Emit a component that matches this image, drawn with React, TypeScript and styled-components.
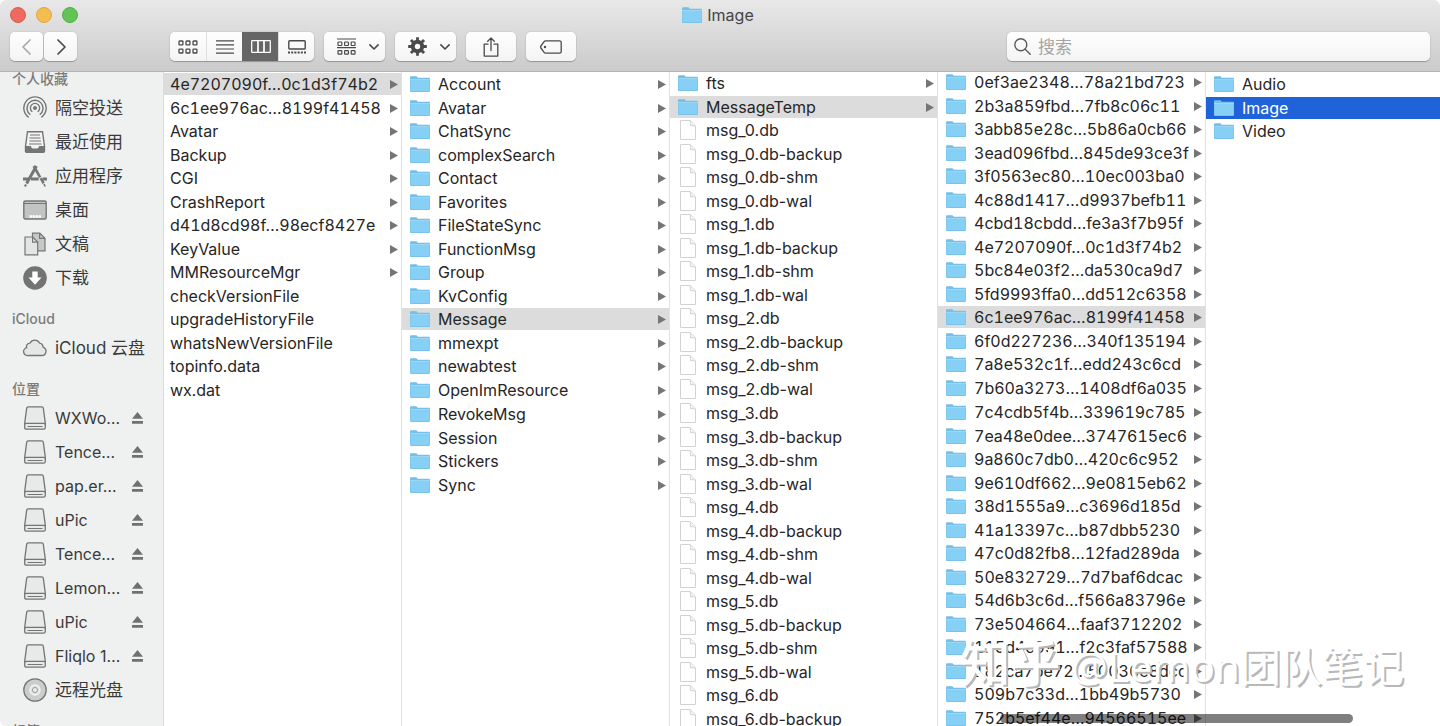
import React from "react";
import styled, { createGlobalStyle, css } from "styled-components";

const GlobalStyle = createGlobalStyle`
  * { box-sizing: border-box; }
  body {
    margin: 0;
    background: #fff;
    font-family: Inter, "Noto Sans CJK SC", sans-serif;
    font-size: 16px;
    color: #262626;
  }
  ul { list-style: none; margin: 0; padding: 0; }
  button { font: inherit; color: inherit; border: 0; padding: 0; background: none; text-align: left; }
  svg { display: block; flex: none; }
`;

const Window = styled.div`
  position: relative;
  display: flex;
  flex-direction: column;
  height: 100vh;
  overflow: hidden;
  border-radius: 6px;
`;

const Header = styled.header`
  flex: none;
  background: linear-gradient(#e8e8e8, #cbcbcb);
  border-bottom: 1px solid #b4b4b4;
  padding: 0 10px 10px;
`;

const TitleBar = styled.div`
  display: grid;
  grid-template-columns: 1fr auto 1fr;
  align-items: center;
  height: 30px;
`;

const Lights = styled.div`
  display: flex;
  gap: 10px;
`;

const Light = styled.button<{ $color: string; $ring: string }>`
  width: 16px;
  height: 16px;
  border-radius: 50%;
  background: ${(p) => p.$color};
  border: 1px solid ${(p) => p.$ring};
`;

const Title = styled.h1`
  display: flex;
  align-items: center;
  gap: 5px;
  margin: 0;
  padding-right: 4px;
  font-size: 16px;
  font-weight: 400;
  color: #454545;
`;

const Toolbar = styled.div`
  display: flex;
  align-items: center;
  gap: 10px;
  height: 31px;
  padding-top: 2px;
`;

const raised = css`
  background: linear-gradient(#fefefe, #f4f4f4);
  border-radius: 5px;
  box-shadow: 0 0 0 1px rgba(0, 0, 0, 0.04), 0 1px 1px rgba(0, 0, 0, 0.25);
`;

const ToolButton = styled.button<{ $width: number }>`
  ${raised}
  display: flex;
  align-items: center;
  justify-content: center;
  gap: 11px;
  width: ${(p) => p.$width}px;
  height: 29px;
  color: #4a4a4a;
  &:disabled { color: #a9a9a9; }
`;

const MenuButton = styled(ToolButton)`
  justify-content: space-between;
  padding: 0 6px 0 13px;
`;

const NavGroup = styled.div`
  display: flex;
  gap: 1px;
  margin-right: 83px;
`;

const Segments = styled.div`
  ${raised}
  display: flex;
  height: 29px;
`;

const Segment = styled.button<{ $active?: boolean }>`
  display: flex;
  align-items: center;
  justify-content: center;
  width: 36px;
  color: ${(p) => (p.$active ? "#fff" : "#4a4a4a")};
  background: ${(p) => (p.$active ? "#666" : "none")};
  &:not(:first-child) { border-left: 1px solid ${(p) => (p.$active ? "#666" : "#dedede")}; }
`;

const SearchBox = styled.label`
  ${raised}
  display: flex;
  align-items: center;
  gap: 7px;
  width: 423px;
  height: 29px;
  margin-left: auto;
  padding: 0 7px;
  color: #5a5a5a;
`;

const SearchInput = styled.input`
  flex: 1;
  min-width: 0;
  border: 0;
  padding: 0;
  outline: 0;
  background: none;
  font: inherit;
  font-size: 17px;
  &::placeholder { color: #a4a4a4; opacity: 1; }
`;

const Body = styled.div`
  display: flex;
  flex: 1;
  min-height: 0;
`;

const Sidebar = styled.nav`
  flex: 0 0 164px;
  overflow: hidden;
  background: #eff1f0;
  border-right: 1px solid #dcdcdc;
`;

const SidebarScroll = styled.div`
  margin-top: -17px;
`;

const GroupTitle = styled.h2`
  margin: 12px 0 0;
  padding-left: 12px;
  font-size: 14px;
  line-height: 24px;
  font-weight: 500;
  color: #7b7b7b;
`;

const Place = styled.li`
  display: flex;
  align-items: center;
  height: 34px;
  padding: 0 20px 0 23px;
`;

const PlaceLink = styled.a`
  display: flex;
  align-items: center;
  gap: 8px;
  flex: 1;
  min-width: 0;
  color: #3a3a3a;
  font-size: 17px;
  line-height: 24px;
  text-decoration: none;
  white-space: nowrap;
`;

const DriveLink = styled(PlaceLink)`
  font-size: 16px;
`;

const Columns = styled.main`
  display: flex;
  flex: 1;
  min-width: 0;
  overflow: hidden;
`;

const Column = styled.ul<{ $width?: number; $first?: boolean; $scroll: number; $tabular: boolean }>`
  flex: ${(p) => (p.$width ? `0 0 ${p.$width}px` : "1 1 0")};
  overflow: hidden;
  font-variant-numeric: ${(p) => (p.$tabular ? "tabular-nums" : "normal")};
  border-left: ${(p) => (p.$first ? "0" : "1px solid #e2e2e2")};
  & > li:first-child { margin-top: ${(p) => 1 - p.$scroll}px; }
`;

const Entry = styled.li`
  height: 22px;
  margin-bottom: 2px;
  &:nth-child(even) { margin-bottom: 1px; }
  &:nth-child(14n) { margin-bottom: 2px; }
`;

type Tone = "none" | "path" | "active";

const EntryButton = styled.button<{ $tone: Tone; $plain: boolean }>`
  display: flex;
  align-items: center;
  gap: 8px;
  width: 100%;
  height: 22px;
  padding: 0 3px 0 ${(p) => (p.$plain ? 6 : 8)}px;
  line-height: 22px;
  white-space: nowrap;
  background: ${(p) => ({ none: "none", path: "#dcdcdc", active: "#2063d9" })[p.$tone]};
  color: ${(p) => (p.$tone === "active" ? "#fff" : "#262626")};
`;

const EntryName = styled.span`
  flex: 1;
  min-width: 0;
`;

const Scrollbar = styled.div`
  position: absolute;
  right: 87px;
  bottom: 3px;
  width: 353px;
  height: 9px;
  border-radius: 5px;
  background: rgba(0, 0, 0, 0.5);
`;

const Watermark = styled.div`
  position: absolute;
  right: 36px;
  bottom: 30px;
  font-size: 41px;
  line-height: 60px;
  font-family: "Open Sans", "Noto Sans CJK SC", sans-serif;
  white-space: nowrap;
  color: #fff;
  text-shadow: 2px 2px 0 #b8b8b8;
  pointer-events: none;
`;

const WatermarkBrand = styled.b`
  font-size: 50px;
  font-weight: 500;
`;

const FolderIcon = () => (
  <svg width="20" height="16" viewBox="0 0 20 16">
    <path d="M0 1.2Q0 .2 1 .2h5.2q.7 0 1 .7l.4.8H19q1 0 1 1V15q0 1-1 1H1q-1 0-1-1z" fill="#73bfe8" />
    <path d="M.4 3.8h19.2V14.5q0 .7-.7.7H1.1q-.7 0-.7-.7z" fill="#86cff5" />
    <path d="M0 3.4h20" stroke="#a9def8" strokeWidth=".8" />
  </svg>
);

const FileIcon = () => (
  <svg width="20" height="20" viewBox="0 0 20 20">
    <path d="M2.5.5h9.7l5.3 5.3v13.7h-15z" fill="#fff" stroke="#d2d2d2" />
    <path d="M12 .7q.8 2.5.3 5 2.700-.4 5 .5" fill="#f4f4f4" stroke="#d2d2d2" />
  </svg>
);

const Arrow = () => (
  <svg width="8" height="9" viewBox="0 0 8 9">
    <path d="M0 0l8 4.500-8 4.500z" fill="#757575" />
  </svg>
);

const Chevron = ({ d }: { d: string }) => (
  <svg width="20" height="20" viewBox="0 0 20 20" fill="none" stroke="currentColor" strokeWidth="1.700" strokeLinecap="round" strokeLinejoin="round">
    <path d={d} />
  </svg>
);

const DownChevron = () => (
  <svg width="10" height="6" viewBox="0 0 10 6" fill="none" stroke="currentColor" strokeWidth="1.600" strokeLinecap="round" strokeLinejoin="round">
    <path d="M.9.9 5 5 9.100.9" />
  </svg>
);

const IconGrid = () => (
  <svg width="20" height="14" viewBox="0 0 20 14" fill="none" stroke="currentColor" strokeWidth="1.300">
    {[1, 9.1].map((y) => [1, 8, 15].map((x) => <rect key={`${x}-${y}`} x={x} y={y} width="3.900" height="3.900" rx=".6" />))}
  </svg>
);

const IconLines = () => (
  <svg width="18" height="14" viewBox="0 0 18 14" stroke="currentColor" strokeWidth="1.200">
    <path d="M0 .8h18M0 4.900h18M0 9h18M0 13.100h18" />
  </svg>
);

const IconColumns = () => (
  <svg width="20" height="13" viewBox="0 0 20 13" fill="none" stroke="currentColor" strokeWidth="1.300">
    <rect x=".7" y=".7" width="18.600" height="11.600" rx=".6" />
    <path d="M7 1v11M13 1v11" strokeWidth="1.700" />
  </svg>
);

const IconGallery = () => (
  <svg width="18" height="14" viewBox="0 0 18 14" fill="none" stroke="currentColor" strokeWidth="1.400">
    <rect x=".8" y=".8" width="16.400" height="8.200" rx=".8" />
    <path d="M0 12.400h18" strokeWidth="2" strokeDasharray="2 1.200" />
  </svg>
);

const IconArrange = () => (
  <svg width="19" height="18" viewBox="0 0 19 18" fill="none" stroke="currentColor" strokeWidth="1.200">
    <path d="M0 1h19M0 9.700h19" />
    {[4, 12.7].map((y) => [1, 7.6, 14.2].map((x) => <rect key={`${x}-${y}`} x={x} y={y} width="3.800" height="3.500" rx=".5" />))}
  </svg>
);

const IconGear = () => (
  <svg width="19" height="19" viewBox="0 0 19 19" fill="none" stroke="currentColor">
    <circle cx="9.500" cy="9.500" r="4.700" strokeWidth="4" />
    {[0, 45, 90, 135].map((a) => (
      <path key={a} d="M9.500.2v3.600M9.500 15.200v3.600" strokeWidth="2.800" transform={`rotate(${a} 9.500 9.500)`} />
    ))}
  </svg>
);

const IconShare = () => (
  <svg width="16" height="20" viewBox="0 0 16 20" fill="none" stroke="currentColor" strokeWidth="1.300" strokeLinecap="round" strokeLinejoin="round">
    <path d="M5 7.200H1.200v11.900h13.600V7.200H11M8 13.500V1.200M4.700 4.300 8 1l3.300 3.300" />
  </svg>
);

const IconTag = () => (
  <svg width="22" height="14" viewBox="0 0 22 14" fill="none" stroke="currentColor" strokeWidth="1.300" strokeLinejoin="round">
    <path d="M5.500.8H19.500q1.700 0 1.700 1.700v9q0 1.700-1.700 1.700H5.500q-.8 0-1.400-.8L.9 8q-.6-1 0-2l3.200-4.400q.6-.8 1.400-.8z" />
    <circle cx="5" cy="7" r="1.200" fill="currentColor" stroke="none" />
  </svg>
);

const IconSearch = () => (
  <svg width="17" height="17" viewBox="0 0 17 17" fill="none" stroke="currentColor" strokeWidth="1.400" strokeLinecap="round">
    <circle cx="6.800" cy="6.800" r="6" />
    <path d="m11.200 11.200 5 5" />
  </svg>
);

const PlaceSvg = ({ children }: { children: React.ReactNode }) => (
  <svg width="24" height="24" viewBox="0 0 24 24" fill="none" stroke="#757575" strokeWidth="1.400">
    {children}
  </svg>
);

const IconAirDrop = () => (
  <PlaceSvg>
    <circle cx="12" cy="12" r="2" fill="#757575" stroke="none" />
    <path d="M9.300 15.700a4.600 4.600 0 1 1 5.400 0M7.300 18.700a8 8 0 1 1 9.400 0M5.700 21.300a11.200 11.200 0 1 1 12.600 0" />
  </PlaceSvg>
);

const IconRecents = () => (
  <PlaceSvg>
    <path d="M4.500 1.700h15l2 14.500v5q0 1-1 1h-17q-1 0-1-1v-5z" fill="#f3f3f3" />
    <path d="M2.500 16h5.300q.5 2.400 2 2.400h4.400q1.500 0 2-2.400h5.300v6h-19z" fill="#757575" stroke="none" />
    <path d="M7 5h10M6.500 8h11M6.500 11h11.500M6 14h12.500" strokeWidth="1.200" />
  </PlaceSvg>
);

const IconApps = () => (
  <PlaceSvg>
    <path d="M13.400 2 3.600 19.500" strokeWidth="3" />
    <path d="M3 20.500 1.900 22.500" strokeWidth="2" />
    <path d="M10.700 2 21 20" strokeWidth="2.600" strokeDasharray="13 1 6 1" />
    <path d="m21 20 1.200 2.500" strokeWidth="1.600" />
    <path d="M0 15h5.200M8 15h7.700M19.500 15H24" strokeWidth="3" />
  </PlaceSvg>
);

const IconDesktop = () => (
  <PlaceSvg>
    <rect x=".8" y="3" width="22.400" height="18" rx="1.500" fill="#c2c3c3" />
    <path d="M1 5.500h22" strokeWidth="1" />
    <path d="M6.500 18.500h11.500" stroke="#fff" strokeWidth="2.600" strokeDasharray="2.500 .5" />
  </PlaceSvg>
);

const IconDocs = () => (
  <PlaceSvg>
    <path d="M9.500 1.200h7.300l5.200 5v12.600H9.500z" fill="#c6c7c7" strokeWidth="1.200" />
    <path d="M16.600 1.300v5.100H22" strokeWidth="1.200" />
    <path d="M2 5h7.700l5 5v12.800H2z" fill="#e3e4e4" strokeWidth="1.200" />
    <path d="M9.600 5.100v5h5" strokeWidth="1.200" />
  </PlaceSvg>
);

const IconDownloads = () => (
  <PlaceSvg>
    <circle cx="12" cy="12" r="11.800" fill="#737373" stroke="none" />
    <path d="M9.300 5.500h5.400v6h3.800L12 18.700 5.500 11.500h3.800z" fill="#fff" stroke="none" />
  </PlaceSvg>
);

const IconCloud = () => (
  <PlaceSvg>
    <path d="M5.500 19.500h13.300a4.300 4.300 0 0 0 1.200-8.400 3.600 3.600 0 0 0-3.300-3.900 5.500 5.500 0 0 0-9.800 0 3.300 3.300 0 0 0-3.200 4.500A4 4 0 0 0 5.500 19.500z" fill="#e5e6e6" strokeWidth="1.300" />
  </PlaceSvg>
);

const IconDrive = () => (
  <PlaceSvg>
    <path d="M5.200.8h13.600q1.300 0 1.500 1.300l2 15v4.400q0 1.700-1.700 1.700H3.400q-1.700 0-1.700-1.700v-4.400l2-15Q3.900.8 5.200.8z" fill="#e8e9e9" strokeWidth="1.300" />
    <path d="M1.900 18.200q.5-.9 1.600-.9h17q1.100 0 1.600.9M4.500 20.500h15" strokeWidth="1.200" />
  </PlaceSvg>
);

const IconDisc = () => (
  <PlaceSvg>
    <circle cx="12" cy="12" r="11.200" fill="#cbcccc" strokeWidth="1.300" />
    <circle cx="12" cy="12" r="5" fill="#dedfdf" stroke="#f3f3f3" />
    <circle cx="12" cy="12" r="2.500" fill="#f0f0f0" stroke="#999" strokeWidth="1" />
  </PlaceSvg>
);

const IconEject = () => (
  <svg width="11" height="12" viewBox="0 0 11 12" fill="#707070">
    <path d="M5.500 0 11 6.800H0zM0 9h11v2.700H0z" />
  </svg>
);

const favorites = [
  { name: "隔空投送", Icon: IconAirDrop },
  { name: "最近使用", Icon: IconRecents },
  { name: "应用程序", Icon: IconApps },
  { name: "桌面", Icon: IconDesktop },
  { name: "文稿", Icon: IconDocs },
  { name: "下载", Icon: IconDownloads },
];

const drives = ["WXWo…", "Tence…", "pap.er…", "uPic", "Tence…", "Lemon…", "uPic", "Fliqlo 1…"];

const accountEntries = [
  "4e7207090f…0c1d3f74b2", "6c1ee976ac…8199f41458", "Avatar", "Backup", "CGI", "CrashReport",
  "d41d8cd98f…98ecf8427e", "KeyValue", "MMResourceMgr", "checkVersionFile", "upgradeHistoryFile",
  "whatsNewVersionFile", "topinfo.data", "wx.dat",
];

const dataEntries = [
  "Account", "Avatar", "ChatSync", "complexSearch", "Contact", "Favorites", "FileStateSync",
  "FunctionMsg", "Group", "KvConfig", "Message", "mmexpt", "newabtest", "OpenImResource",
  "RevokeMsg", "Session", "Stickers", "Sync",
];

const messageEntries = [
  "fts",
  "MessageTemp",
  ...[0, 1, 2, 3, 4, 5].flatMap((n) => ["", "-backup", "-shm", "-wal"].map((s) => `msg_${n}.db${s}`)),
  "msg_6.db",
  "msg_6.db-backup",
];

const chatEntries = [
  "0ef3ae2348…78a21bd723", "2b3a859fbd…7fb8c06c11", "3abb85e28c…5b86a0cb66", "3ead096fbd…845de93ce3f",
  "3f0563ec80…10ec003ba0", "4c88d1417…d9937befb11", "4cbd18cbdd…fe3a3f7b95f", "4e7207090f…0c1d3f74b2",
  "5bc84e03f2…da530ca9d7", "5fd9993ffa0…dd512c6358", "6c1ee976ac…8199f41458", "6f0d227236…340f135194",
  "7a8e532c1f…edd243c6cd", "7b60a3273…1408df6a035", "7c4cdb5f4b…339619c785", "7ea48e0dee…3747615ec6",
  "9a860c7db0…420c6c952", "9e610df662…9e0815eb62", "38d1555a9…c3696d185d", "41a13397c…b87dbb5230",
  "47c0d82fb8…12fad289da", "50e832729…7d7baf6dcac", "54d6b3c6d…f566a83796e", "73e504664…faaf3712202",
  "115d4c991…f2c3faf57588", "182ca7be72…50036e8dcd", "509b7c33d…1bb49b5730", "752b5ef44e…94566515ee",
];

type BrowserColumnProps = {
  label: string;
  entries: string[];
  width?: number;
  scroll?: number;
  plain?: boolean;
  tabular?: boolean;
  selected: number;
  tone?: Tone;
  folders?: number;
  arrows?: number;
};

function BrowserColumn({
  label, entries, width, scroll = 0, plain = false, tabular = false, selected, tone = "path",
  folders = entries.length, arrows = entries.length,
}: BrowserColumnProps) {
  return (
    <Column aria-label={label} $width={width} $first={plain} $scroll={scroll} $tabular={tabular}>
      {entries.map((name, i) => (
        <Entry key={name}>
          <EntryButton type="button" $plain={plain} $tone={i === selected ? tone : "none"}>
            {!plain && (i < folders ? <FolderIcon /> : <FileIcon />)}
            <EntryName>{name}</EntryName>
            {i < arrows && <Arrow />}
          </EntryButton>
        </Entry>
      ))}
    </Column>
  );
}

export default function App() {
  return (
    <>
      <GlobalStyle />
      <Window>
        <Header>
          <TitleBar>
            <Lights>
              <Light type="button" aria-label="关闭" $color="#ee6a5f" $ring="#dd5a50" />
              <Light type="button" aria-label="最小化" $color="#f5bd4f" $ring="#e0a83c" />
              <Light type="button" aria-label="缩放" $color="#61c454" $ring="#4eb043" />
            </Lights>
            <Title><FolderIcon />Image</Title>
          </TitleBar>
          <Toolbar>
            <NavGroup>
              <ToolButton type="button" aria-label="后退" disabled $width={33}><Chevron d="M13 3 6 10l7 7" /></ToolButton>
              <ToolButton type="button" aria-label="前进" $width={33}><Chevron d="m7 3 7 7-7 7" /></ToolButton>
            </NavGroup>
            <Segments>
              <Segment type="button" aria-label="图标"><IconGrid /></Segment>
              <Segment type="button" aria-label="列表"><IconLines /></Segment>
              <Segment type="button" aria-label="分栏" $active><IconColumns /></Segment>
              <Segment type="button" aria-label="画廊"><IconGallery /></Segment>
            </Segments>
            <MenuButton type="button" aria-label="排列" $width={61}><IconArrange /><DownChevron /></MenuButton>
            <MenuButton type="button" aria-label="操作" $width={61}><IconGear /><DownChevron /></MenuButton>
            <ToolButton type="button" aria-label="共享" $width={50}><IconShare /></ToolButton>
            <ToolButton type="button" aria-label="标签" $width={50}><IconTag /></ToolButton>
            <SearchBox>
              <IconSearch />
              <SearchInput type="text" placeholder="搜索" aria-label="搜索" />
            </SearchBox>
          </Toolbar>
        </Header>
        <Body>
          <Sidebar>
            <SidebarScroll>
              <GroupTitle>个人收藏</GroupTitle>
              <ul>
                {favorites.map(({ name, Icon }) => (
                  <Place key={name}><PlaceLink href="#"><Icon />{name}</PlaceLink></Place>
                ))}
              </ul>
              <GroupTitle>iCloud</GroupTitle>
              <ul>
                <Place><PlaceLink href="#"><IconCloud />iCloud 云盘</PlaceLink></Place>
              </ul>
              <GroupTitle>位置</GroupTitle>
              <ul>
                {drives.map((name, i) => (
                  <Place key={i}>
                    <DriveLink href="#"><IconDrive />{name}</DriveLink>
                    <button type="button" aria-label="推出"><IconEject /></button>
                  </Place>
                ))}
                <Place><PlaceLink href="#"><IconDisc />远程光盘</PlaceLink></Place>
              </ul>
              <GroupTitle>标签</GroupTitle>
            </SidebarScroll>
          </Sidebar>
          <Columns>
            <BrowserColumn label="账号" entries={accountEntries} width={237} plain tabular selected={0} arrows={9} />
            <BrowserColumn label="数据" entries={dataEntries} width={268} selected={10} />
            <BrowserColumn label="Message" entries={messageEntries} width={268} scroll={1} selected={1} folders={2} arrows={2} />
            <BrowserColumn label="MessageTemp" entries={chatEntries} width={268} scroll={2} tabular selected={10} />
            <BrowserColumn label="6c1ee976ac" entries={["Audio", "Image", "Video"]} selected={1} tone="active" arrows={0} />
          </Columns>
        </Body>
        <Watermark><WatermarkBrand>知乎</WatermarkBrand> @Lemon团队笔记</Watermark>
        <Scrollbar />
      </Window>
    </>
  );
}
